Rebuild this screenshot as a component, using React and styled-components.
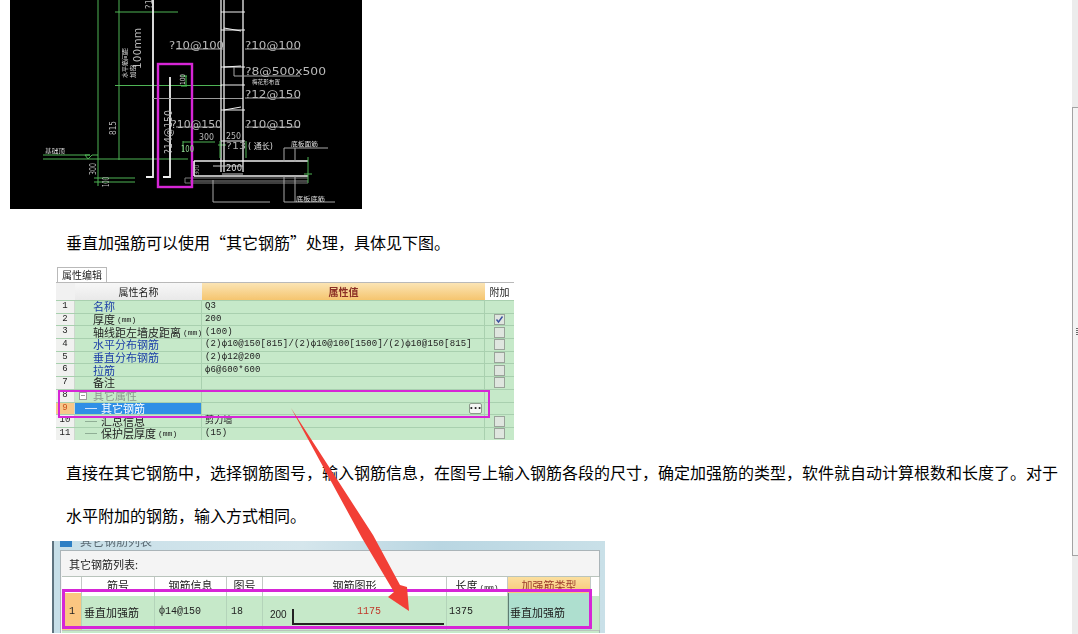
import React from "react";
import styled, { createGlobalStyle } from "styled-components";

const CJK = `"Noto Sans CJK SC", "Liberation Sans", sans-serif`;
const MONO = `"Liberation Mono", "Noto Sans CJK SC", monospace`;

const introText = "垂直加强筋可以使用\u201C其它钢筋\u201D处理\uFF0C具体见下图\u3002";
const detailText =
  "直接在其它钢筋中\uFF0C选择钢筋图号\uFF0C输入钢筋信息\uFF0C在图号上输入钢筋各段的尺寸\uFF0C确定加强筋的类型\uFF0C软件就自动计算根数和长度了\u3002对于水平附加的钢筋\uFF0C输入方式相同\u3002";

const GlobalStyle = createGlobalStyle`
  html, body {
    margin: 0;
    height: 100%;
    background: #fff;
    overflow: hidden;
  }
`;

const Page = styled.div`
  display: flex;
  position: relative;
  width: 1078px;
  height: 634px;
  overflow: hidden;
  font-family: ${CJK};
  color: #000;
`;

const Article = styled.main`
  flex: 1;
  min-width: 0;
`;

const CadFigure = styled.svg`
  display: block;
  width: 352px;
  height: 209px;
  margin-left: 10px;
  background: #000;
  filter: blur(0.35px);
`;

const Paragraph = styled.p`
  width: 996px;
  margin: ${(p) => p.$top}px 0 0 66px;
  font-size: 16px;
  line-height: 43px;
`;

/* property editor screenshot */
const PropShot = styled.div`
  position: relative;
  width: 461px;
  height: 173px;
  margin: 3px 0 0 53px;
  overflow: hidden;
  filter: blur(0.3px);
`;

const PropTab = styled.div`
  width: 50px;
  height: 15px;
  margin-left: 4px;
  border: 1px solid #b9b9b9;
  border-bottom: 0;
  box-sizing: border-box;
  font-size: 10px;
  line-height: 14px;
  text-align: center;
  color: #222;
  background: #fff;
`;

const PropGrid = styled.div`
  width: 458px;
  margin-left: 3px;
  border-top: 1px solid #b9b9b9;
`;

const PropLine = styled.div`
  display: grid;
  grid-template-columns: 19px 127px 283px 29px;
  height: ${(p) => p.$height}px;
  box-sizing: border-box;
  border-bottom: 1px solid #a9d0af;
  background: #c6e9c9;
  font-size: 11px;
  line-height: 11px;
`;

const HeadCell = styled.div`
  display: flex;
  align-items: center;
  justify-content: center;
  font-size: 10px;
  color: ${(p) => p.$color || "#222"};
  font-weight: ${(p) => (p.$bold ? 700 : 400)};
  background: ${(p) => p.$bg || "#f1f1f1"};
`;

const IndexCell = styled.div`
  text-align: center;
  font-family: ${MONO};
  font-size: 9px;
  color: ${(p) => (p.$active ? "#c8501c" : "#222")};
  background: ${(p) => (p.$active ? "#f7c88a" : "#f0f1ef")};
  border-right: 1px solid #cfd8cf;
`;

const NameCell = styled.div`
  display: flex;
  align-items: center;
  padding-left: ${(p) => p.$indent}px;
  white-space: nowrap;
  color: ${(p) => p.$color};
  background: ${(p) => p.$bg || "transparent"};
  border-right: 1px solid #a9d0af;
`;

const Unit = styled.span`
  margin-left: 2px;
  font-family: ${MONO};
  font-size: 8px;
`;

const TreeMark = styled.span`
  width: ${(p) => p.$width}px;
  margin-right: 4px;
  flex: none;
  border-top: 1px solid ${(p) => p.$color};
`;

const FoldBox = styled.span`
  width: 6px;
  height: 6px;
  margin: 0 6px 0 -14px;
  border: 1px solid #9a9a9a;
  background: linear-gradient(#9a9a9a, #9a9a9a) center / 4px 1px no-repeat #fff;
`;

const ValueCell = styled.div`
  display: flex;
  align-items: center;
  padding: 0 1px 0 3px;
  font-family: ${MONO};
  font-size: 9px;
  letter-spacing: 0.16px;
  white-space: nowrap;
  color: #222;
  border-right: 1px solid #a9d0af;
`;

const AttachCell = styled.div`
  display: flex;
  align-items: center;
  justify-content: center;
`;

const CheckBox = styled.span`
  display: flex;
  align-items: center;
  justify-content: center;
  width: 9px;
  height: 9px;
  border: 1px solid #9aa39a;
  background: #dfe6df;
`;

const MoreButton = styled.span`
  display: flex;
  align-items: center;
  justify-content: center;
  width: 11px;
  height: 9px;
  margin-left: auto;
  margin-right: 1px;
  border: 1px solid #8c9a8c;
  border-radius: 2px;
  background: #f3f5f3;
  font-size: 7px;
  font-weight: 700;
  line-height: 5px;
  letter-spacing: 0;
`;

const Highlight = styled.div`
  position: absolute;
  left: ${(p) => p.$left}px;
  top: ${(p) => p.$top}px;
  width: ${(p) => p.$width}px;
  height: ${(p) => p.$height}px;
  box-sizing: border-box;
  border: ${(p) => p.$thick}px solid #d626d6;
  pointer-events: none;
`;

/* rebar list window screenshot */
const WindowShot = styled.div`
  width: 553px;
  height: 92px;
  margin: 4px 0 0 52px;
  box-sizing: border-box;
  padding: 9px 5px 0 6px;
  border-left: 2px solid #5f7480;
  position: relative;
  overflow: hidden;
  background: linear-gradient(90deg, #c7dfe8, #d5e6ec 45%, #b9d6e2 70%, #c9e0e8);
  filter: blur(0.3px);
`;

const TitleStrip = styled.div`
  position: absolute;
  left: 6px;
  top: -7px;
  display: flex;
  align-items: center;
  gap: 8px;
  font-size: 12px;
  line-height: 14px;
  color: #5b6b74;
`;

const TitleIcon = styled.span`
  width: 12px;
  height: 12px;
  background: #2c7fc4;
`;

const Panel = styled.div`
  height: 83px;
  padding-left: 1px;
  border: 1px solid #aab4b8;
  border-bottom: 0;
  background: #f4f4f4;
`;

const ListLabel = styled.div`
  height: 25px;
  padding-left: 7px;
  font-size: 11px;
  line-height: 27px;
  color: #222;
`;

const ListRow = styled.div`
  display: grid;
  grid-template-columns: 20px 73px 72px 36px 184px 61px 83px 9px;
  height: ${(p) => p.$height}px;
  background: ${(p) => p.$bg};
  border-top: 1px solid #b9c4bc;
`;

const ListHead = styled.div`
  text-align: center;
  font-size: 11px;
  line-height: 16px;
  white-space: nowrap;
  color: ${(p) => (p.$accent ? "#9a3b2a" : "#222")};
  background: ${(p) => (p.$accent ? "linear-gradient(#fbdf9f, #f7c471)" : "#fff")};
  border-right: 1px solid #c3c9c5;
`;

const ListCell = styled.div`
  display: flex;
  align-items: center;
  min-width: 0;
  padding-left: ${(p) => p.$pad ?? 4}px;
  font-size: ${(p) => p.$size || 10}px;
  font-family: ${(p) => (p.$mono ? MONO : CJK)};
  white-space: nowrap;
  color: #222;
  background: ${(p) => p.$bg || "transparent"};
  border-right: 1px solid #b4d4ba;
  box-shadow: ${(p) => (p.$edge ? "inset 1px 0 0 #5e7d72" : "none")};
`;

const ShapeLength = styled.span`
  width: 22px;
  margin-top: 6px;
  font-family: "Liberation Sans", sans-serif;
  font-size: 10px;
`;

const ShapeLine = styled.div`
  width: 150px;
  height: 14px;
  margin-top: 11px;
  border-left: 2px solid #222;
  border-bottom: 2px solid #222;
  text-align: center;
  font-family: ${MONO};
  font-size: 10px;
  line-height: 5px;
  color: #c0392b;
`;

const ArrowLayer = styled.svg`
  position: absolute;
  left: 0;
  top: 0;
  pointer-events: none;
`;

const Scrollbar = styled.aside`
  flex: none;
  width: 6px;
  padding-top: 107px;
  box-sizing: border-box;
  background: #ececec;
`;

const ScrollThumb = styled.div`
  display: flex;
  align-items: center;
  justify-content: flex-end;
  height: 449px;
  box-sizing: border-box;
  border: 1px solid #a3a3a3;
  border-right: 0;
  background: #f4f4f4;
`;

const ScrollGrip = styled.span`
  width: 2px;
  height: 7px;
  background: repeating-linear-gradient(#6a6a6a 0 1px, #f4f4f4 1px 2px);
`;

const propRows = [
  { n: 1, name: "名称", color: "#1c3fa8", value: "Q3" },
  { n: 2, name: "厚度", unit: "(mm)", value: "200", check: "on" },
  { n: 3, name: "轴线距左墙皮距离", unit: "(mm)", value: "(100)", check: "off" },
  { n: 4, name: "水平分布钢筋", color: "#1c3fa8", value: "(2)ф10@150[815]/(2)ф10@100[1500]/(2)ф10@150[815]", check: "off" },
  { n: 5, name: "垂直分布钢筋", color: "#1c3fa8", value: "(2)ф12@200", check: "off" },
  { n: 6, name: "拉筋", color: "#1c3fa8", value: "ф6@600*600", check: "off" },
  { n: 7, name: "备注", check: "off" },
  { n: 8, name: "其它属性", color: "#8a968c", fold: true },
  { n: 9, name: "其它钢筋", color: "#fff", bg: "#2f8fe6", tree: 12, active: true, more: true },
  { n: 10, name: "汇总信息", tree: 12, value: "剪力墙", check: "off" },
  { n: 11, name: "保护层厚度", unit: "(mm)", tree: 12, value: "(15)", check: "off" },
];

const listHeads = ["", "筋号", "钢筋信息", "图号", "钢筋图形", "长度", "加强筋类型", ""];

const Wire = ({ d, color = "#f0f0f0", w = 1 }) => <path d={d} stroke={color} strokeWidth={w} fill="none" />;

const Label = ({ x, y, width, size = 11, color = "#b9b9b9", rotate, children }) => (
  <text
    x={x}
    y={y}
    fontFamily='"DejaVu Sans", "Noto Sans CJK SC", sans-serif'
    fontSize={size}
    fill={color}
    textLength={width}
    lengthAdjust="spacingAndGlyphs"
    transform={rotate ? `rotate(-90 ${x} ${y})` : undefined}
  >
    {children}
  </text>
);

// coordinates follow the page, the view box starts at the picture's left edge
const CadDrawing = () => (
  <CadFigure viewBox="10 0 352 209">
    <Wire d="M98 0V186M119 0V160M115 12H178M115 85.5H222M43 159H188" color="#4fb455" />
    <Wire d="M94 178H135M94 182H135" color="#4fb455" />
    <Wire d="M43 155H90L85 155L88 159L92 155H98" color="#4fb455" />
    <Wire d="M153 0V177H146" w={1.8} />
    <Wire d="M170 77V177H163" w={1.8} />
    <Wire d="M153 98.5H243" color="#9a9a9a" />
    <Wire d="M186 76V86M181 76H187M181 86H187" color="#48c452" />
    <Wire d="M183 141V152M183 142H215M218 145H226" color="#4fb455" />
    <Wire d="M221 0V172M224 0V172M243 0V172" w={1.3} />
    <Wire d="M221 12H245M221 30H245M221 67H245M221 85H245M221 110H245M221 141H245M224 28L241 31M224 110L241 107M224 67L241 66" />
    <Wire d="M234 67V76H300" color="#a8a8a8" />
    <Wire d="M220 141V158M246 141V158" color="#4fb455" />
    <Wire d="M176 49H224M245 49H300M245 98H300M176 127H222M245 127H300" color="#a8a8a8" />
    <Wire d="M194 161H308M194 176H308M194 161V176" w={1.7} />
    <Wire d="M213 166H243M222 174H243" color="#c8c8c8" w={1.2} />
    <Wire d="M185 178H308M185 183H308M185 178V183" color="#7d7d7d" />
    <Wire d="M190 181H308" color="#5d5d5d" w={1.5} />
    <Wire d="M308 157V183M304 174H312" color="#4fb455" />
    <Wire d="M284 148H328M284 148V162M295 148V162M284 176V202H335M295 176V202M213 180V202H270" color="#a8a8a8" />
    <rect x="158" y="64" width="34" height="123" fill="none" stroke="#d626d6" strokeWidth="2.4" />
    <Label x={169} y={49} width={55}>?10@100</Label>
    <Label x={245} y={49} width={56}>?10@100</Label>
    <Label x={245} y={75} width={81}>?8@500x500</Label>
    <Label x={245} y={98} width={56}>?12@150</Label>
    <Label x={171} y={128} width={51}>?10@150</Label>
    <Label x={245} y={128} width={56}>?10@150</Label>
    <Label x={252} y={84} width={28} size={6} color="#ddd">梅花形布置</Label>
    <Label x={199} y={140} width={15} size={8}>300</Label>
    <Label x={226} y={139} width={15} size={8}>250</Label>
    <Label x={181} y={152} width={13} size={8} color="#8fd08f">100</Label>
    <Label x={226} y={149} width={20} size={9} color="#aaa">?13</Label>
    <Label x={248} y={149} width={25} size={8} color="#ddd">( 通长)</Label>
    <Label x={226} y={171} width={16} size={8} color="#ddd">200</Label>
    <Label x={291} y={146} width={27} size={6} color="#ddd">底板面筋</Label>
    <Label x={296} y={201} width={29} size={6} color="#ddd">底板底筋</Label>
    <Label x={45} y={153} width={20} size={6} color="#ddd">基础顶</Label>
    <Label x={116} y={135} width={14} size={8} rotate>815</Label>
    <Label x={96} y={175} width={12} size={8} rotate>300</Label>
    <Label x={109} y={187} width={10} size={8} rotate>100</Label>
    <Label x={172} y={154} width={44} size={10} rotate>?14@150</Label>
    <Label x={185} y={85} width={11} size={7} color="#ddd" rotate>100</Label>
    <Label x={152} y={9} width={10} size={9} rotate>?1</Label>
    <Label x={127} y={78} width={30} size={6} color="#ddd" rotate>水平筋间距</Label>
    <Label x={135} y={78} width={13} size={6} color="#ddd" rotate>加密</Label>
    <Label x={141} y={69} width={41} size={11} rotate>100mm</Label>
    <Label x={199} y={175} width={10} size={6} color="#aaa" rotate>300</Label>
  </CadFigure>
);

const PropertyShot = () => (
  <PropShot>
    <PropTab>属性编辑</PropTab>
    <PropGrid>
      <PropLine $height={18}>
        <HeadCell />
        <HeadCell $bg="linear-gradient(#f7f7f7, #e9e9e9)">属性名称</HeadCell>
        <HeadCell $bold $color="#8a2e24" $bg="linear-gradient(#fbe4b4, #f5c56f)">属性值</HeadCell>
        <HeadCell $bg="#fff">附加</HeadCell>
      </PropLine>
      {propRows.map((row) => (
        <PropLine key={row.n} $height={12.7}>
          <IndexCell $active={row.active}>{row.n}</IndexCell>
          <NameCell $indent={row.tree ? 10 : 18} $color={row.color || "#222"} $bg={row.bg}>
            {row.fold && <FoldBox />}
            {row.tree && <TreeMark $width={row.tree} $color={row.active ? "#cfe4fa" : "#8fae95"} />}
            {row.name}
            {row.unit && <Unit>{row.unit}</Unit>}
          </NameCell>
          <ValueCell>
            {row.value}
            {row.more && <MoreButton>•••</MoreButton>}
          </ValueCell>
          <AttachCell>
            {row.check && (
              <CheckBox>
                {row.check === "on" && (
                  <svg width="9" height="9" viewBox="0 0 9 9">
                    <path d="M1.5 4.5L3.5 7L7.5 1.5" stroke="#3b4f9e" strokeWidth="1.4" fill="none" />
                  </svg>
                )}
              </CheckBox>
            )}
          </AttachCell>
        </PropLine>
      ))}
    </PropGrid>
    <Highlight $left={5} $top={123} $width={432} $height={28} $thick={2} />
  </PropShot>
);

const RebarWindow = () => (
  <WindowShot>
    <TitleStrip>
      <TitleIcon />
      其它钢筋列表
    </TitleStrip>
    <Panel>
      <ListLabel>其它钢筋列表:</ListLabel>
      <ListRow $height={15} $bg="#fff">
        {listHeads.map((head, i) => (
          <ListHead key={i} $accent={i === 6}>
            {head}
            {i === 5 && <Unit>(mm)</Unit>}
          </ListHead>
        ))}
      </ListRow>
      <ListRow $height={37} $bg="#c6e9c9">
        <ListCell $bg="#fbc681" $mono $pad={7}>1</ListCell>
        <ListCell $size={11} $pad={2}>垂直加强筋</ListCell>
        <ListCell $mono>ф14@150</ListCell>
        <ListCell $mono>18</ListCell>
        <ListCell $pad={7}>
          <ShapeLength>200</ShapeLength>
          <ShapeLine>1175</ShapeLine>
        </ListCell>
        <ListCell $mono $pad={2}>1375</ListCell>
        <ListCell $size={11} $pad={2} $bg="#aedfcf" $edge>垂直加强筋</ListCell>
        <ListCell />
      </ListRow>
      <ListRow $height={6} $bg="#c6e9c9" />
    </Panel>
    <Highlight $left={8} $top={48} $width={530} $height={40} $thick={3} />
  </WindowShot>
);

export default function App() {
  return (
    <>
      <GlobalStyle />
      <Page>
        <Article>
          <CadDrawing />
          <Paragraph $top={12}>{introText}</Paragraph>
          <PropertyShot />
          <Paragraph $top={11}>{detailText}</Paragraph>
          <RebarWindow />
        </Article>
        <Scrollbar>
          <ScrollThumb>
            <ScrollGrip />
          </ScrollThumb>
        </Scrollbar>
        <ArrowLayer width="1072" height="634" viewBox="0 0 1072 634">
          <path d="M291 408L373 535L400 585L407 587L409 611L388 597L394 592L362 538Z" fill="#f23f36" />
        </ArrowLayer>
      </Page>
    </>
  );
}
